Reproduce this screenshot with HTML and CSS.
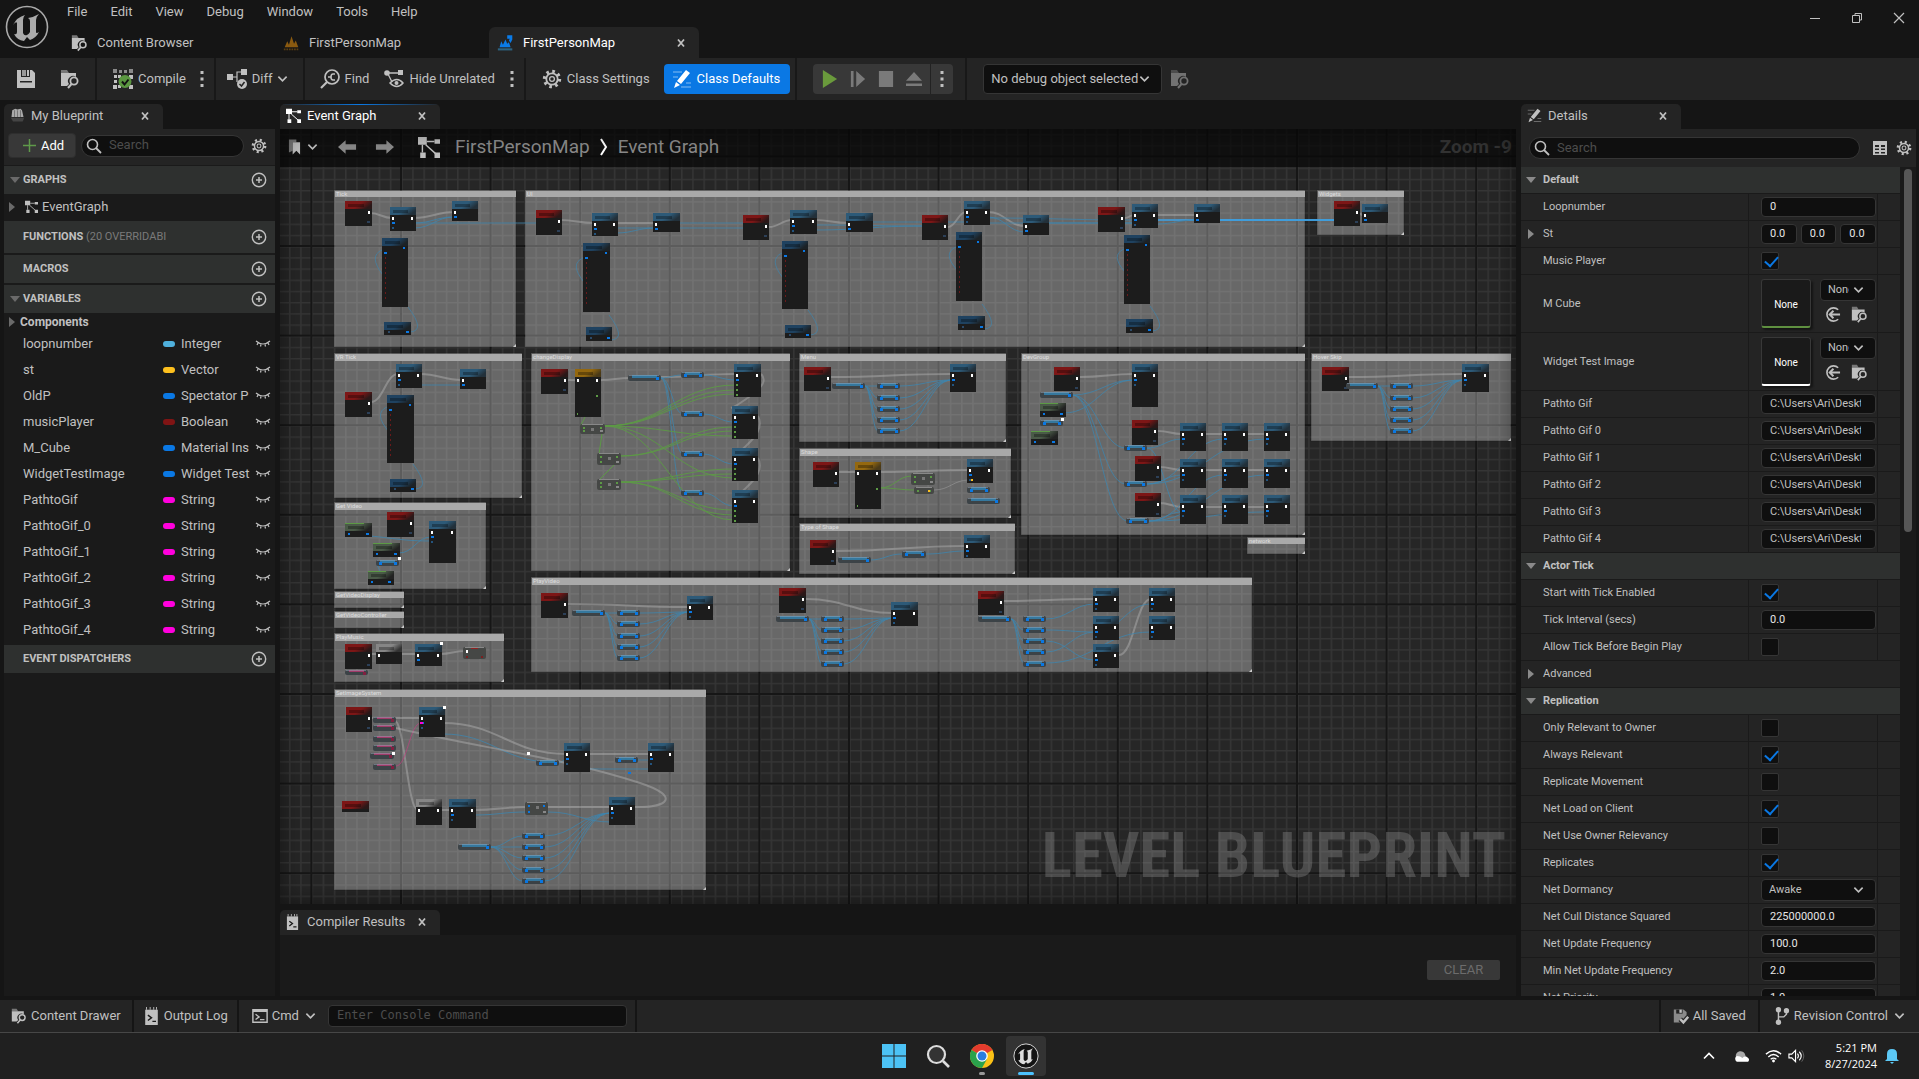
FILE: index.html
```
<!DOCTYPE html>
<html lang="en">
<head>
	<meta charset="utf-8">
	<title>FirstPersonMap</title>
	<link rel="stylesheet" href="styles.css">
</head>
<body>
<svg class="sprite" aria-hidden="true">
	<symbol id="i-folder" viewBox="0 0 20 20"><path fill="#777" d="M1 1h6l2 3H1z"/><path fill="currentColor" d="M1 4h15v4a5 5 0 0 0-7 7l-2 2H1z"/><circle cx="14" cy="12" r="3.6" fill="none" stroke="currentColor" stroke-width="1.8"/><path d="M11.500 15L8 19" stroke="currentColor" stroke-width="2"/></symbol>
	<symbol id="i-map" viewBox="0 0 20 20"><path fill="currentColor" d="M2 15l3-7 2 4 3-10 3 9 2-4 3 8z"/><path stroke="currentColor" stroke-width="2" stroke-dasharray="2 1" opacity=".6" d="M1 17.500h18"/></symbol>
	<symbol id="i-mapbp" viewBox="0 0 20 20"><path fill="currentColor" d="M3 15l2-7 2 4 3-6 2 5 2-2 2 6z"/><path fill="currentColor" d="M12 1h6v5l-2 4-2-3 1-2h-3z"/><path stroke="#2c6382" stroke-width="2.500" d="M1 17.500h17"/></symbol>
	<symbol id="i-x" viewBox="0 0 10 10"><path d="M2 1.500l6 7M8 1.500l-6 7" stroke="currentColor" stroke-width="1.800"/></symbol>
	<symbol id="i-save" viewBox="0 0 20 20"><path fill="currentColor" d="M1 1h15l3 3v15H1z"/><path fill="#242424" d="M5 1h9v7H5zM4 12h12v1.500H4z"/><path fill="#999" d="M6 1h4v6H6z"/><path fill="currentColor" d="M11 1h2v6h-2z"/></symbol>
	<symbol id="i-saved" viewBox="0 0 20 20"><path fill="#8a8a8a" d="M1 2h12l4 3v6l-6 7H1z"/><path fill="#242424" d="M4 2h8v5H4z"/><path fill="currentColor" d="M8 2h3v4H8z"/><path fill="none" stroke="#242424" stroke-width="6" d="M9 14l4 4 6-7"/><path fill="none" stroke="currentColor" stroke-width="3" d="M9 14l4 4 6-7"/></symbol>
	<symbol id="i-compile" viewBox="0 0 20 20"><g fill="#8a8a8a"><path d="M0 0h4v4H0zM6 1h3v3H6zM11 1h3v3h-3zM16 0h4v4h-4z"/></g><path fill="currentColor" d="M1 6h3v3H1zM5 6h3v3H5zM1 11h3v3H1zM0 16h4v4H0zM5 16h3v3H5zM16 6h4v4h-4zM16 16h4v4h-4z"/><circle cx="12" cy="12.500" r="6.500" fill="#5a9640"/><path d="M9 12.500l2.500 3 4-5" fill="none" stroke="#111" stroke-width="2"/></symbol>
	<symbol id="i-dots" viewBox="0 0 4 18"><path fill="currentColor" d="M.5 1h3v3h-3zM.5 7.500h3v3h-3zM.5 14h3v3h-3z"/></symbol>
	<symbol id="i-chev" viewBox="0 0 12 8"><path d="M1.500 1.500L6 6l4.500-4.500" fill="none" stroke="currentColor" stroke-width="1.800"/></symbol>
	<symbol id="i-diff" viewBox="0 0 20 20"><path fill="currentColor" d="M0 5h6v6H0zM14 0h6v6h-6z"/><path d="M5 8h5V3h4M10 8v5" fill="none" stroke="currentColor" stroke-width="1.200"/><circle cx="15" cy="15" r="5" fill="currentColor"/><path d="M12.500 15l2 2 3-4" fill="none" stroke="#242424" stroke-width="1.500"/></symbol>
	<symbol id="i-find" viewBox="0 0 20 20"><circle cx="12" cy="8" r="7" fill="none" stroke="currentColor" stroke-width="1.700"/><path d="M7 13l-6 6" stroke="currentColor" stroke-width="2.200"/><path d="M8 8h3m4-3h-2q-2 0-2 3t2 3h2" fill="none" stroke="currentColor" stroke-width="1.600"/></symbol>
	<symbol id="i-hide" viewBox="0 0 20 20"><circle cx="3" cy="4" r="2.800" fill="currentColor"/><path fill="currentColor" d="M14 1h5v5h-5z"/><path d="M5 4h9M4 5l4 8" stroke="currentColor" stroke-width="1.300"/><path d="M6 14q7-7 13 0q-6 7-13 0z" fill="none" stroke="currentColor" stroke-width="1.500"/><circle cx="12.500" cy="14" r="2" fill="currentColor"/></symbol>
	<symbol id="i-gear" viewBox="0 0 20 20"><circle cx="10" cy="10" r="7.600" fill="none" stroke="currentColor" stroke-width="3.200" stroke-dasharray="2.600 3.370"/><circle cx="10" cy="10" r="5.700" fill="none" stroke="currentColor" stroke-width="1.800"/><circle cx="10" cy="10" r="2.400" fill="none" stroke="currentColor" stroke-width="1.300"/></symbol>
	<symbol id="i-pencil" viewBox="0 0 20 20"><path d="M1 3h9M1 8h5M14 14h5M9 18h10" stroke="currentColor" stroke-width="1.200" opacity=".5"/><path fill="currentColor" d="M14 1l4 3-9 11-4-3zM4 13l4 3-6 3z"/></symbol>
	<symbol id="i-graph" viewBox="0 0 20 20"><path fill="currentColor" d="M0 1h8v7H0zM15 3h5v4h-5zM2 15h5v5H2zM15 15h5v5h-5z"/><path d="M8 5h7M4 8v7M7 8l9 8" stroke="currentColor" stroke-width="1.300"/></symbol>
	<symbol id="i-book" viewBox="0 0 20 20"><path fill="#aaa" d="M2 12l1-9 4-2 3 1 4-1 2 2 2 9z"/><path fill="#444" d="M1 13h18l-2 5H4z"/><path d="M6 3v9M10 3v9M14 3v9" stroke="#666"/></symbol>
	<symbol id="i-search" viewBox="0 0 16 16"><circle cx="6.500" cy="6.500" r="5" fill="none" stroke="currentColor" stroke-width="1.600"/><path d="M10 10l5 5" stroke="currentColor" stroke-width="1.800"/></symbol>
	<symbol id="i-plus" viewBox="0 0 14 14"><path d="M7 0v14M0 7h14" stroke="currentColor" stroke-width="1.600"/></symbol>
	<symbol id="i-addc" viewBox="0 0 16 16"><circle cx="8" cy="8" r="6.700" fill="none" stroke="currentColor" stroke-width="1.400"/><path d="M8 5v6M5 8h6" stroke="currentColor" stroke-width="1.500"/></symbol>
	<symbol id="i-down" viewBox="0 0 10 6"><path fill="currentColor" d="M0 0h10L5 6z"/></symbol>
	<symbol id="i-right" viewBox="0 0 6 10"><path fill="currentColor" d="M0 0v10l6-5z"/></symbol>
	<symbol id="i-eye" viewBox="0 0 16 8"><path d="M1 1q7 6 14 0M3 3l-1 2M6 4.500l-.5 2M10 4.500l.5 2M13 3l1 2" fill="none" stroke="currentColor" stroke-width="1.200"/></symbol>
	<symbol id="i-mark" viewBox="0 0 14 18"><path fill="#777" d="M1 1h8v3H5v9l-4 2z"/><path fill="currentColor" d="M5 4h8v13l-4-4-4 4z"/></symbol>
	<symbol id="i-arrow" viewBox="0 0 20 16"><path fill="currentColor" d="M0 8l8-7v4h11v6H8v4z"/></symbol>
	<symbol id="i-log" viewBox="0 0 14 20"><path fill="currentColor" d="M0 3h14v17H0z"/><path fill="currentColor" d="M1 0h1v3H1zM5 0h1v3H5zM9 0h1v3H9zM12 0h1v3h-1z"/><path d="M3 9l4 3-4 3M8 16h4" fill="none" stroke="#1a1a1a" stroke-width="1.600"/></symbol>
	<symbol id="i-cmd" viewBox="0 0 18 18"><path d="M1 2h16v14H1z" fill="none" stroke="currentColor" stroke-width="1.600"/><path d="M1 3h16" stroke="currentColor" stroke-width="3"/><path d="M4 7l4 3-4 3M9 13h5" fill="none" stroke="currentColor" stroke-width="1.500"/></symbol>
	<symbol id="i-branch" viewBox="0 0 18 20"><g fill="currentColor"><circle cx="5" cy="3" r="3"/><circle cx="5" cy="17" r="3"/><circle cx="14" cy="4" r="3"/></g><path d="M5 3v14M14 4v4l-3 3H5" fill="none" stroke="currentColor" stroke-width="1.600"/></symbol>
	<symbol id="i-table" viewBox="0 0 16 16"><path fill="currentColor" d="M1 1h14v14H1z"/><path fill="#242424" d="M3 5h4v2H3zM9 5h4v2H9zM3 8.500h4v1.500H3zM9 8.500h4v1.500H9zM3 12h4v1.500H3zM9 12h4v1.500H9z"/></symbol>
	<symbol id="i-use" viewBox="0 0 18 18"><path d="M15 4a7 7 0 1 0 0 10" fill="none" stroke="currentColor" stroke-width="1.700"/><path d="M17 9H6m4-4L6 9l4 4" fill="none" stroke="currentColor" stroke-width="2"/></symbol>
	<symbol id="i-unreal" viewBox="0 0 44 44"><circle cx="22" cy="22" r="20.500" fill="#141414" stroke="currentColor" stroke-width="1.600"/><path fill="currentColor" d="M8 20Q12 12 20 10q-2 2-2 5v13q1 3 4 2 2-1 3-3V16q0-2-2-3 6-1 11-4-3 3-3 6v12q0 2 3 0-3 6-9 8l-3-3-3 4q-7-1-10-7 3 1 3-2V18q-1-2-4 2z"/></symbol>
</svg>

<div class="app">
	<header class="titlebar">
		<svg class="logo"><use href="#i-unreal"/></svg>
		<div class="title-main">
			<div class="menu-row">
				<nav class="menu">
					<a href="#">File</a><a href="#">Edit</a><a href="#">View</a><a href="#">Debug</a><a href="#">Window</a><a href="#">Tools</a><a href="#">Help</a>
				</nav>
				<div class="winbtns">
					<button aria-label="Minimize"><svg viewBox="0 0 12 12"><path d="M1 6.500h10" stroke="currentColor"/></svg></button>
					<button aria-label="Restore"><svg viewBox="0 0 12 12"><path d="M1.500 3.500h7v7h-7zM4 3V1.500h6.500V8H9" fill="none" stroke="currentColor"/></svg></button>
					<button aria-label="Close"><svg viewBox="0 0 12 12"><path d="M1 1l10 10M11 1L1 11" stroke="currentColor" stroke-width="1.200"/></svg></button>
				</div>
			</div>
			<div class="doc-tabs">
				<div class="doc-tab"><svg><use href="#i-folder"/></svg>Content Browser</div>
				<div class="doc-tab level"><svg><use href="#i-map"/></svg>FirstPersonMap</div>
				<div class="doc-tab active"><svg><use href="#i-mapbp"/></svg>FirstPersonMap<button class="close" aria-label="Close tab"><svg><use href="#i-x"/></svg></button></div>
			</div>
		</div>
	</header>

	<div class="toolbar">
		<div class="group files">
			<button aria-label="Save"><svg><use href="#i-save"/></svg></button>
			<button aria-label="Browse"><svg><use href="#i-folder"/></svg></button>
		</div>
		<div class="group">
			<button><svg><use href="#i-compile"/></svg>Compile</button>
			<button class="more" aria-label="Compile options"><svg><use href="#i-dots"/></svg></button>
		</div>
		<div class="group diff">
			<button><svg><use href="#i-diff"/></svg>Diff<svg class="chev"><use href="#i-chev"/></svg></button>
		</div>
		<div class="group find">
			<button><svg><use href="#i-find"/></svg>Find</button>
			<button><svg><use href="#i-hide"/></svg>Hide Unrelated</button>
			<button class="more" aria-label="Hide options"><svg><use href="#i-dots"/></svg></button>
		</div>
		<div class="group class">
			<button><svg><use href="#i-gear"/></svg>Class Settings</button>
			<button class="primary"><svg><use href="#i-pencil"/></svg>Class Defaults</button>
		</div>
		<div class="group sim">
			<div class="play">
				<button aria-label="Play"><svg viewBox="0 0 18 20"><path d="M1 0l16 10L1 20z" fill="#6a9a3c"/></svg></button>
				<button aria-label="Step"><svg viewBox="0 0 18 20"><path d="M1 1h3v18H1zM7 1l10 9-10 9z" fill="#7a7a7a"/></svg></button>
				<button aria-label="Stop"><svg viewBox="0 0 18 20"><path d="M1 1h16v18H1z" fill="#7a7a7a"/></svg></button>
				<button aria-label="Eject"><svg viewBox="0 0 18 20"><path d="M9 2l9 10H0zM0 15h18v3H0z" fill="#7a7a7a"/></svg></button>
				<button class="more" aria-label="Play options"><svg><use href="#i-dots"/></svg></button>
			</div>
		</div>
		<div class="group debug">
			<span class="select"><select aria-label="Debug object"><option>No debug object selected</option></select><svg><use href="#i-chev"/></svg></span>
			<button class="dim" aria-label="Locate object"><svg><use href="#i-folder"/></svg></button>
		</div>
	</div>

	<main class="work">
		<aside class="dock blueprint">
			<div class="tab"><svg><use href="#i-book"/></svg>My Blueprint<button class="close" aria-label="Close"><svg><use href="#i-x"/></svg></button></div>
			<div class="panel">
				<div class="panel-tools">
					<button class="add"><svg><use href="#i-plus"/></svg>Add</button>
					<label class="search"><svg><use href="#i-search"/></svg><input type="text" placeholder="Search" aria-label="Search blueprint"></label>
					<button class="icon" aria-label="Settings"><svg><use href="#i-gear"/></svg></button>
				</div>
				<div class="sec open">GRAPHS<button aria-label="Add graph"><svg><use href="#i-addc"/></svg></button></div>
				<div class="tree"><svg class="tri"><use href="#i-right"/></svg><svg class="gico"><use href="#i-graph"/></svg>EventGraph</div>
				<div class="sec tall">FUNCTIONS&nbsp;<span>(20 OVERRIDABI</span><button aria-label="Add function"><svg><use href="#i-addc"/></svg></button></div>
				<div class="sec">MACROS<button aria-label="Add macro"><svg><use href="#i-addc"/></svg></button></div>
				<div class="sec open">VARIABLES<button aria-label="Add variable"><svg><use href="#i-addc"/></svg></button></div>
				<div class="comp"><svg class="tri"><use href="#i-right"/></svg>Components</div>
				<ul class="vars">
					<li><span>loopnumber</span><i class="int"></i><em>Integer</em><svg><use href="#i-eye"/></svg></li>
					<li><span>st</span><i class="vec"></i><em>Vector</em><svg><use href="#i-eye"/></svg></li>
					<li><span>OldP</span><i class="obj"></i><em>Spectator P</em><svg><use href="#i-eye"/></svg></li>
					<li><span>musicPlayer</span><i class="bool"></i><em>Boolean</em><svg><use href="#i-eye"/></svg></li>
					<li><span>M_Cube</span><i class="obj"></i><em>Material Ins</em><svg><use href="#i-eye"/></svg></li>
					<li><span>WidgetTestImage</span><i class="obj"></i><em>Widget Test</em><svg><use href="#i-eye"/></svg></li>
					<li><span>PathtoGif</span><i class="str"></i><em>String</em><svg><use href="#i-eye"/></svg></li>
					<li><span>PathtoGif_0</span><i class="str"></i><em>String</em><svg><use href="#i-eye"/></svg></li>
					<li><span>PathtoGif_1</span><i class="str"></i><em>String</em><svg><use href="#i-eye"/></svg></li>
					<li><span>PathtoGif_2</span><i class="str"></i><em>String</em><svg><use href="#i-eye"/></svg></li>
					<li><span>PathtoGif_3</span><i class="str"></i><em>String</em><svg><use href="#i-eye"/></svg></li>
					<li><span>PathtoGif_4</span><i class="str"></i><em>String</em><svg><use href="#i-eye"/></svg></li>
				</ul>
				<div class="sec">EVENT DISPATCHERS<button aria-label="Add dispatcher"><svg><use href="#i-addc"/></svg></button></div>
			</div>
		</aside>

		<section class="center">
			<div class="dock graph-dock">
				<div class="tab focus"><svg><use href="#i-graph"/></svg>Event Graph<button class="close" aria-label="Close"><svg><use href="#i-x"/></svg></button></div>
				<div class="graph">
					<svg class="canvas" id="canvas"></svg>
					<div class="crumbs">
						<button class="mark" aria-label="Bookmarks"><svg><use href="#i-mark"/></svg><svg class="chev"><use href="#i-chev"/></svg></button>
						<button class="nav" aria-label="Back"><svg><use href="#i-arrow"/></svg></button>
						<button class="nav fwd" aria-label="Forward"><svg><use href="#i-arrow"/></svg></button>
						<svg class="gico"><use href="#i-graph"/></svg>
						<a href="#">FirstPersonMap</a>
						<svg class="sep" viewBox="0 0 8 18"><path d="M1 1l5 8-5 8" fill="none" stroke="#fff" stroke-width="2"/></svg>
						<a href="#">Event Graph</a>
						<b>Zoom -9</b>
					</div>
					<div class="watermark">LEVEL BLUEPRINT</div>
				</div>
			</div>
			<div class="dock results">
				<div class="tab"><svg class="log"><use href="#i-log"/></svg>Compiler Results<button class="close" aria-label="Close"><svg><use href="#i-x"/></svg></button></div>
				<div class="panel"><button class="clear" disabled>CLEAR</button></div>
			</div>
		</section>

		<aside class="dock details">
			<div class="tab"><svg><use href="#i-pencil"/></svg>Details<button class="close" aria-label="Close"><svg><use href="#i-x"/></svg></button></div>
			<div class="panel">
				<div class="panel-tools">
					<label class="search"><svg><use href="#i-search"/></svg><input type="text" placeholder="Search" aria-label="Search details"></label>
					<button class="icon" aria-label="Property matrix"><svg><use href="#i-table"/></svg></button>
					<button class="icon" aria-label="Settings"><svg><use href="#i-gear"/></svg></button>
				</div>
				<div class="scroll">
					<form class="props">
						<div class="head"><svg><use href="#i-down"/></svg>Default</div>
						<div class="row"><label for="loop">Loopnumber</label><div><input type="text" id="loop" value="0"></div></div>
						<div class="row"><label for="stx"><svg class="tri"><use href="#i-right"/></svg>St</label><div class="vec3"><input type="text" id="stx" value="0.0"><input type="text" aria-label="St Y" value="0.0"><input type="text" aria-label="St Z" value="0.0"></div></div>
						<div class="row"><label for="music">Music Player</label><div><input type="checkbox" id="music" checked></div></div>
						<div class="row asset"><label for="cube">M Cube</label><div><span class="thumb green">None</span><div class="pick"><span class="select"><select id="cube"><option>None</option></select><svg><use href="#i-chev"/></svg></span><button type="button" aria-label="Use selected"><svg><use href="#i-use"/></svg></button><button type="button" aria-label="Browse to asset"><svg><use href="#i-folder"/></svg></button></div></div></div>
						<div class="row asset"><label for="wimg">Widget Test Image</label><div><span class="thumb">None</span><div class="pick"><span class="select"><select id="wimg"><option>None</option></select><svg><use href="#i-chev"/></svg></span><button type="button" aria-label="Use selected"><svg><use href="#i-use"/></svg></button><button type="button" aria-label="Browse to asset"><svg><use href="#i-folder"/></svg></button></div></div></div>
						<div class="row path"><label for="g">Pathto Gif</label><div><input type="text" id="g" value="C:\Users\Ari\Desktop"></div></div>
						<div class="row path"><label for="g0">Pathto Gif 0</label><div><input type="text" id="g0" value="C:\Users\Ari\Desktop"></div></div>
						<div class="row path"><label for="g1">Pathto Gif 1</label><div><input type="text" id="g1" value="C:\Users\Ari\Desktop"></div></div>
						<div class="row path"><label for="g2">Pathto Gif 2</label><div><input type="text" id="g2" value="C:\Users\Ari\Desktop"></div></div>
						<div class="row path"><label for="g3">Pathto Gif 3</label><div><input type="text" id="g3" value="C:\Users\Ari\Desktop"></div></div>
						<div class="row path"><label for="g4">Pathto Gif 4</label><div><input type="text" id="g4" value="C:\Users\Ari\Desktop"></div></div>
						<div class="head"><svg><use href="#i-down"/></svg>Actor Tick</div>
						<div class="row"><label for="tick">Start with Tick Enabled</label><div><input type="checkbox" id="tick" checked></div></div>
						<div class="row"><label for="intv">Tick Interval (secs)</label><div><input type="text" id="intv" value="0.0"></div></div>
						<div class="row"><label for="before">Allow Tick Before Begin Play</label><div><input type="checkbox" id="before"></div></div>
						<div class="row wide"><span class="name"><svg class="tri"><use href="#i-right"/></svg>Advanced</span></div>
						<div class="head"><svg><use href="#i-down"/></svg>Replication</div>
						<div class="row"><label for="r1">Only Relevant to Owner</label><div><input type="checkbox" id="r1"></div></div>
						<div class="row"><label for="r2">Always Relevant</label><div><input type="checkbox" id="r2" checked></div></div>
						<div class="row"><label for="r3">Replicate Movement</label><div><input type="checkbox" id="r3"></div></div>
						<div class="row"><label for="r4">Net Load on Client</label><div><input type="checkbox" id="r4" checked></div></div>
						<div class="row"><label for="r5">Net Use Owner Relevancy</label><div><input type="checkbox" id="r5"></div></div>
						<div class="row"><label for="r6">Replicates</label><div><input type="checkbox" id="r6" checked></div></div>
						<div class="row"><label for="dorm">Net Dormancy</label><div><span class="select"><select id="dorm"><option>Awake</option></select><svg><use href="#i-chev"/></svg></span></div></div>
						<div class="row"><label for="cull">Net Cull Distance Squared</label><div><input type="text" id="cull" value="225000000.0"></div></div>
						<div class="row"><label for="freq">Net Update Frequency</label><div><input type="text" id="freq" value="100.0"></div></div>
						<div class="row"><label for="minf">Min Net Update Frequency</label><div><input type="text" id="minf" value="2.0"></div></div>
						<div class="row"><label for="prio">Net Priority</label><div><input type="text" id="prio" value="1.0"></div></div>
					</form>
					<div class="bar"><div class="thumb-bar"></div></div>
				</div>
			</div>
		</aside>
	</main>

	<footer class="status">
		<button class="st"><svg><use href="#i-folder"/></svg>Content Drawer</button>
		<button class="st out"><svg class="log"><use href="#i-log"/></svg>Output Log</button>
		<div class="st cmd">
			<button><svg><use href="#i-cmd"/></svg>Cmd<svg class="chev"><use href="#i-chev"/></svg></button>
			<input type="text" placeholder="Enter Console Command" aria-label="Console command">
		</div>
		<div class="st fill"></div>
		<button class="st saved"><svg><use href="#i-saved"/></svg>All Saved</button>
		<button class="st rev"><svg><use href="#i-branch"/></svg>Revision Control<svg class="chev"><use href="#i-chev"/></svg></button>
	</footer>
</div>

<div class="taskbar">
	<div class="pins">
		<button aria-label="Start"><svg viewBox="0 0 24 24"><path fill="#4cc2f5" d="M0 0h11.500v11.500H0zM12.500 0H24v11.500H12.500zM0 12.500h11.500V24H0zM12.500 12.500H24V24H12.500z"/></svg></button>
		<button aria-label="Search"><svg viewBox="0 0 24 24"><circle cx="10.500" cy="10.500" r="8.500" fill="#333" stroke="#ddd" stroke-width="2.200"/><path d="M17 17l6 6" stroke="#ddd" stroke-width="2.600"/></svg></button>
		<button class="running" aria-label="Chrome"><svg viewBox="0 0 24 24"><circle cx="12" cy="12" r="12" fill="#fbc116"/><path fill="#e33b2e" d="M12 12L1.600 6A12 12 0 0 1 22.400 6z"/><path fill="#2ba24c" d="M12 12L1.600 6A12 12 0 0 0 12 24l5-9z"/><circle cx="12" cy="12" r="5.800" fill="#fff"/><circle cx="12" cy="12" r="4.500" fill="#2a7de1"/></svg></button>
		<button class="current" aria-label="Unreal Editor"><svg class="ue"><use href="#i-unreal"/></svg></button>
	</div>
	<div class="tray">
		<svg class="up" viewBox="0 0 12 8"><path d="M1 6.500l5-5 5 5" fill="none" stroke="currentColor" stroke-width="1.600"/></svg>
		<svg class="cloud" viewBox="0 0 18 12"><path fill="#aaa" d="M3 7a5 5 0 0 1 10-2l1 4H3z"/><path fill="#fff" d="M4 12a3.500 3.500 0 0 1 0-6q4 0 6 2 3-3 6 0a2.500 2.500 0 0 1 0 4z"/></svg>
		<svg class="wifi" viewBox="0 0 18 14"><path d="M1 5q8-7 16 0M3.500 8q5.500-5 11 0M6 10.500q3-2.500 6 0" fill="none" stroke="currentColor" stroke-width="1.500"/><circle cx="9" cy="12.300" r="1.500" fill="currentColor"/></svg>
		<svg class="vol" viewBox="0 0 18 14"><path d="M1 5h3l4-4v12L4 9H1zM10 4.500q2 2.500 0 5M12 2.500q4 4.500 0 9" fill="none" stroke="currentColor" stroke-width="1.200"/><path d="M14.500 1q4.500 6 0 12" fill="none" stroke="#666"/></svg>
		<div class="clock">5:21 PM<br>8/27/2024</div>
		<svg class="bell" viewBox="0 0 14 16"><path fill="#5cc8f5" d="M2 11V6q0-5 5-5t5 5v5l2 2H0zM5 14h4l-2 2z"/></svg>
	</div>
</div>
<script src="graph.js"></script>
</body>
</html>
```
FILE: styles.css
```
* {
	box-sizing: border-box;
}
body {
	margin: 0;
	height: 100vh;
	display: flex;
	flex-direction: column;
	overflow: hidden;
	background: #151515;
	color: #c0c0c0;
	font: 13px/16px Roboto, "Liberation Sans", sans-serif;
}
.sprite {
	position: absolute;
	width: 0;
	height: 0;
}
svg {
	display: block;
	flex: none;
}
button {
	display: flex;
	align-items: center;
	padding: 0;
	border: 0;
	background: none;
	color: inherit;
	font: inherit;
}
a {
	color: inherit;
	text-decoration: none;
}
input, select {
	min-width: 0;
	border: 1px solid #353535;
	border-radius: 4px;
	background: #0f0f0f;
	color: inherit;
	font: inherit;
	outline: 0;
}
input::placeholder {
	color: #4c4c4c;
	opacity: 1;
}
.app {
	flex: 1;
	min-height: 0;
	display: flex;
	flex-direction: column;
}
.chev {
	width: 11px;
	height: 8px;
}

/* title bar */
.titlebar {
	display: flex;
	height: 58px;
}
.logo {
	width: 44px;
	height: 44px;
	margin: 5px 6px 5px 5px;
	color: #aaa;
}
.title-main {
	flex: 1;
	display: flex;
	flex-direction: column;
}
.menu-row {
	display: flex;
	justify-content: space-between;
	height: 27px;
}
.menu {
	display: flex;
	gap: 23px;
	padding: 4px 0 0 12px;
}
.winbtns {
	display: flex;
	gap: 30px;
	padding: 8px 14px 0 0;
}
.winbtns svg {
	width: 12px;
	height: 12px;
}
.doc-tabs {
	display: flex;
	height: 31px;
}
.doc-tab {
	display: flex;
	align-items: center;
	width: 212px;
	padding-left: 16px;
}
.doc-tab > svg {
	width: 17px;
	height: 20px;
	margin-right: 9px;
}
.doc-tab.level > svg {
	color: #8a5a10;
}
.doc-tab.active {
	width: 210px;
	padding-left: 8px;
	border-radius: 6px 6px 0 0;
	background: #242424;
	color: #fff;
}
.doc-tab.active > svg {
	color: #0a7be8;
}
.doc-tab.level {
	width: 222px;
}
.close {
	margin-left: auto;
	margin-right: 13px;
	color: #c0c0c0;
}
.close svg {
	width: 10px;
	height: 10px;
}

/* toolbar */
.toolbar {
	display: flex;
	align-items: stretch;
	height: 42px;
	background: #242424;
}
.group {
	display: flex;
	align-items: center;
	gap: 14px;
	padding: 0 10px 0 16px;
	border-right: 2px solid #181818;
}
.group button > svg:first-child {
	width: 20px;
	height: 20px;
	margin-right: 5px;
}
.group .chev {
	margin-left: 4px;
}
.group .more > svg:first-child {
	width: 4px;
	height: 18px;
	margin-right: 0;
}
.files {
	gap: 19px;
}
.diff {
	padding-left: 11px;
	padding-right: 15px;
}
.find {
	gap: 15px;
	padding-left: 15px;
}
.class {
	padding-right: 5px;
}
.primary {
	height: 30px;
	padding: 0 10px 0 8px;
	border-radius: 4px;
	background: #0a78e4;
	color: #fff;
}
.sim {
	padding: 0 12px 0 16px;
}
.play {
	display: flex;
	align-items: center;
	gap: 12px;
	height: 30px;
	padding-left: 9px;
	border-radius: 4px;
	background: #383838;
}
.play button > svg:first-child {
	width: 16px;
	height: 18px;
	margin: 0;
}
.play .more {
	height: 30px;
	padding: 0 9px;
	border-left: 1px solid #222;
	margin-left: -4px;
}
.debug {
	border: 0;
	gap: 8px;
}
.debug .select {
	width: 179px;
	height: 30px;
}
.dim {
	opacity: .5;
}
.select {
	position: relative;
	display: block;
}
.select select {
	width: 100%;
	height: 100%;
	padding: 0 26px 0 7px;
	appearance: none;
}
.debug .select select {
	padding: 0 20px 0 7px;
}
.select svg {
	position: absolute;
	right: 12px;
	top: 50%;
	width: 11px;
	height: 8px;
	margin-top: -4px;
	pointer-events: none;
}

/* docks */
.work {
	flex: 1;
	min-height: 0;
	display: grid;
	grid-template-columns: 271px minmax(0, 1fr) 395px;
	gap: 5px;
	padding: 4px 3px 4px 4px;
}
.dock {
	display: flex;
	flex-direction: column;
	min-height: 0;
}
.tab {
	display: flex;
	align-items: center;
	width: 160px;
	height: 25px;
	padding: 0 0 2px 6px;
	border-radius: 5px 5px 0 0;
	background: #242424;
}
.tab > svg {
	width: 15px;
	height: 15px;
	margin-right: 6px;
}
.tab > svg.log {
	width: 13px;
	height: 16px;
	margin-right: 8px;
}
.tab.focus {
	color: #fff;
	background: linear-gradient(90deg, #242424, #0a78e4 50%, #242424) 0 0 / 100% 1px no-repeat #242424;
}
.panel {
	flex: 1;
	min-height: 0;
	background: #1a1a1a;
}
.panel-tools {
	display: flex;
	align-items: center;
	background: #242424;
}
.search {
	position: relative;
	flex: 1;
	min-width: 0;
}
.search svg {
	position: absolute;
	left: 5px;
	top: 3px;
	width: 16px;
	height: 16px;
}
.search input {
	display: block;
	width: 100%;
	height: 22px;
	padding: 0 10px 2px 27px;
	border-radius: 11px;
}
.icon svg {
	width: 16px;
	height: 16px;
}

/* my blueprint */
.blueprint .tab {
	width: 159px;
}
.blueprint .panel-tools {
	gap: 5px;
	height: 36px;
	padding: 0 8px 3px 4px;
	margin-bottom: 1px;
}
.add {
	width: 68px;
	height: 25px;
	gap: 5px;
	padding-left: 14px;
	border: 1px solid #2e2e2e;
	border-radius: 4px;
	background: #383838;
	color: #fff;
}
.add svg {
	width: 13px;
	height: 13px;
	color: #5f9a4a;
}
.blueprint .icon {
	margin-left: 2px;
}
.sec {
	position: relative;
	display: flex;
	align-items: center;
	height: 28px;
	padding: 0 8px 0 19px;
	margin-bottom: 2px;
	background: #2e302f;
	font-size: 11px;
	font-weight: bold;
}
.sec span {
	color: #7a7a7a;
	font-weight: normal;
}
.sec button {
	margin-left: auto;
}
.sec button svg {
	width: 16px;
	height: 16px;
}
.sec.tall {
	height: 32px;
}
.sec.open {
	margin-bottom: 0;
}
.sec.open::before {
	content: "";
	position: absolute;
	left: 6px;
	top: 11px;
	border: 5px solid transparent;
	border-top: 6px solid #6a6a6a;
	border-bottom: 0;
}
.tri {
	width: 6px;
	height: 10px;
	color: #6a6a6a;
}
.tree {
	display: flex;
	align-items: center;
	height: 27px;
	padding: 0 0 2px 5px;
}
.gico {
	width: 15px;
	height: 13px;
	margin: 0 3px 0 9px;
}
.comp {
	display: flex;
	align-items: center;
	gap: 5px;
	height: 18px;
	padding-left: 5px;
	font-size: 12px;
	font-weight: bold;
}
.vars {
	margin: 0 0 2px;
	padding: 0;
	list-style: none;
}
.vars li {
	display: grid;
	grid-template-columns: 134px 12px 68px 16px;
	column-gap: 6px;
	align-items: center;
	height: 26px;
	padding-left: 19px;
}
.vars i {
	width: 12px;
	height: 6px;
	border-radius: 3px;
	background: #f0d;
}
.vars em {
	font-style: normal;
	white-space: nowrap;
}
.vars svg {
	width: 16px;
	height: 8px;
}
.vars .int { background: #4fb0dc; }
.vars .vec { background: #fdc01e; }
.vars .obj { background: #0a78e4; }
.vars .bool { background: #801414; }

/* graph */
.center {
	display: flex;
	flex-direction: column;
	gap: 6px;
	min-height: 0;
}
.graph-dock {
	flex: 1;
}
.graph {
	position: relative;
	flex: 1;
	min-height: 0;
	overflow: hidden;
	background: #262626;
}
.canvas {
	position: absolute;
	width: 100%;
	height: 100%;
}
.graph::after {
	content: "";
	position: absolute;
	inset: 0;
	box-shadow: inset 0 0 24px rgba(0, 0, 0, .5);
	pointer-events: none;
}
.crumbs {
	position: relative;
	display: flex;
	align-items: center;
	height: 38px;
	padding: 0 4px 2px 8px;
	background: rgba(10, 10, 10, .75);
	color: #8a8a8a;
	font-size: 19px;
	line-height: 24px;
}
.crumbs .mark {
	gap: 6px;
	margin-right: 20px;
	color: #c0c0c0;
}
.mark svg:first-child {
	width: 13px;
	height: 18px;
}
.nav {
	margin-right: 18px;
}
.nav svg {
	width: 19px;
	height: 16px;
}
.fwd svg {
	transform: scaleX(-1);
}
.crumbs .gico {
	width: 22px;
	height: 22px;
	margin: 0 15px 0 6px;
	color: #c0c0c0;
}
.crumbs .sep {
	width: 8px;
	height: 18px;
	margin: 0 10px;
}
.crumbs b {
	margin-left: auto;
	color: #333;
}
.watermark {
	position: absolute;
	right: 10px;
	bottom: 12px;
	color: rgba(150, 150, 150, .35);
	font: bold 63px/72px "Roboto Condensed", "Liberation Sans Narrow", "Liberation Sans", sans-serif;
	white-space: nowrap;
}
.w-title {
	fill: #ddd;
	font-size: 6px;
}
.results .panel {
	display: flex;
	justify-content: flex-end;
	align-items: flex-end;
	height: 61px;
	flex: none;
	padding: 0 16px 16px;
}
.clear {
	justify-content: center;
	width: 73px;
	height: 20px;
	border-radius: 2px;
	background: #383838;
	color: #6c6c6c;
}

/* details */
.details .panel {
	display: flex;
	flex-direction: column;
	font-size: 11px;
}
.details .panel-tools {
	gap: 8px;
	height: 38px;
	padding: 0 4px 0 8px;
	font-size: 13px;
}
.details .search {
	margin-right: 4px;
}
.scroll {
	flex: 1;
	min-height: 0;
	display: flex;
	overflow: hidden;
}
.props {
	flex: 1;
	min-width: 0;
}
.head, .row {
	display: flex;
	height: 27px;
	border-bottom: 1px solid #1a1a1a;
	background: #242424;
}
.head {
	align-items: center;
	gap: 7px;
	padding-left: 5px;
	background: #2e302f;
	font-weight: bold;
}
.head svg {
	width: 10px;
	height: 6px;
	color: #8a8a8a;
}
.row label, .name {
	position: relative;
	display: flex;
	flex: 1;
	align-items: center;
	padding: 0 0 1px 22px;
}
.row .tri {
	position: absolute;
	left: 7px;
	color: #8a8a8a;
}
.row > div {
	display: flex;
	align-items: center;
	width: 152px;
	padding: 0 24px 0 12px;
	border-left: 1px solid #1a1a1a;
	background: linear-gradient(#1a1a1a, #1a1a1a) 128px 0 / 1px 100% no-repeat;
}
.row input[type=text] {
	width: 100%;
	height: 20px;
	padding: 0 14px 2px 8px;
	color: #e6e6e6;
}
.row.path input[type=text] {
	color: #c0c0c0;
}
.row .vec3 {
	gap: 4px;
}
.row .vec3 input[type=text] {
	padding-right: 0;
}
.row input[type=checkbox] {
	width: 18px;
	height: 18px;
	margin: 0;
	border-radius: 2px;
	appearance: none;
}
.row input:checked::after {
	content: "";
	display: block;
	width: 11px;
	height: 6px;
	margin: 3px;
	border: solid #0a78e4;
	border-width: 0 0 2px 2px;
	transform: rotate(-48deg);
}
.row .select {
	width: 100%;
	height: 22px;
}
.row.asset {
	height: 58px;
}
.row.asset label {
	padding-bottom: 0;
}
.thumb {
	display: flex;
	flex: none;
	align-items: center;
	justify-content: center;
	width: 50px;
	height: 49px;
	padding-top: 3px;
	border: 1px solid #383838;
	border-bottom: 2px solid #fff;
	border-radius: 3px;
	background: #1a1a1a;
	box-shadow: 2px 2px 2px #151515;
	color: #fff;
	font-size: 10px;
}
.thumb.green {
	border-bottom-color: #5f9040;
}
.pick {
	display: flex;
	flex-wrap: wrap;
	gap: 5px 10px;
	margin: 0 0 5px 9px;
}
.pick button:nth-of-type(1) {
	margin-left: 4px;
}
.pick button svg {
	width: 17px;
	height: 17px;
}
.pick .select select {
	padding-right: 26px;
	text-overflow: clip;
}
.bar {
	width: 16px;
	padding: 2px 4px;
}
.thumb-bar {
	height: 44%;
	border-radius: 4px;
	background: #575757;
}

/* status bar */
.status {
	display: flex;
	gap: 2px;
	height: 33px;
	border-bottom: 1px solid #474747;
}
.st {
	display: flex;
	align-items: center;
	padding: 0 11px;
	background: #242424;
}
.st svg {
	width: 16px;
	height: 18px;
	margin-right: 4px;
}
.st .log {
	width: 13px;
	height: 18px;
	margin-right: 6px;
}
.st .chev {
	width: 11px;
	height: 8px;
	margin: 0 0 0 6px;
}
.st.out {
	padding-right: 9px;
}
.cmd {
	gap: 12px;
	padding: 0 8px 0 13px;
}
.cmd input {
	width: 299px;
	height: 22px;
	padding: 0 8px 2px;
	font: 12px "DejaVu Sans Mono", monospace;
}
.fill {
	flex: 1;
}
.saved {
	padding: 0 12px;
}
.rev {
	padding: 0 14px;
}

/* taskbar */
.taskbar {
	position: relative;
	display: flex;
	justify-content: center;
	height: 46px;
	background: #202020;
}
.pins {
	display: flex;
	align-items: center;
	gap: 4px;
}
.pins button {
	position: relative;
	justify-content: center;
	width: 40px;
	height: 40px;
	border-radius: 4px;
}
.pins svg {
	width: 24px;
	height: 24px;
}
.pins .ue {
	width: 26px;
	height: 26px;
	color: #ddd;
}
.current {
	background: #333;
}
.running::after, .current::after {
	content: "";
	position: absolute;
	bottom: 1px;
	left: 17px;
	width: 6px;
	height: 3px;
	border-radius: 2px;
	background: #999;
}
.current::after {
	left: 12px;
	width: 16px;
	background: #4cc2ff;
}
.tray {
	position: absolute;
	right: 20px;
	top: 0;
	display: flex;
	align-items: center;
	height: 46px;
	color: #fff;
}
.up {
	width: 12px;
	height: 8px;
	margin-right: 18px;
}
.cloud {
	width: 17px;
	height: 12px;
	margin-right: 15px;
}
.wifi {
	width: 17px;
	height: 14px;
	margin-right: 6px;
}
.vol {
	width: 17px;
	height: 14px;
	margin-right: 20px;
}
.clock {
	text-align: right;
	font: 11px/16px "Open Sans", sans-serif;
}
.bell {
	width: 14px;
	height: 16px;
	margin-left: 8px;
}
```
FILE: graph.js
```
// view offset of the graph panel
var OX = 280, OY = 129;

// comment boxes: x, y, right, bottom, title
var comments = [
	[334, 190, 516, 347, 'Tick'], [525, 190, 1305, 347, 'UI'], [1317, 190, 1404, 235, 'Widgets'],
	[334, 353, 522, 498, 'VR Tick'], [531, 353, 790, 571, 'changeDisplay'], [799, 353, 1006, 442, 'Menu'],
	[799, 448, 1011, 518, 'Shape'], [799, 523, 1015, 574, 'Type of Shape'], [1021, 353, 1305, 535, 'DevGroup'],
	[1311, 353, 1511, 441, 'Hover Skip'], [1247, 537, 1305, 554, 'network'], [531, 577, 1252, 672, 'PlayVideo'],
	[334, 502, 486, 589, 'Get Video'], [334, 591, 404, 608, 'GetVideoDisplay'], [334, 611, 404, 628, 'GetVideoController'],
	[334, 633, 504, 682, 'PlayMusic'], [334, 689, 706, 890, 'SetImageSystem']
];

// nodes: kind, x, y, w, h
var nodes = [
	'r 345 201 27 25', 'b 390 207 26 24', 'b 452 201 26 20', 'p 382 238 26 69', 'p 384 322 27 13',
	'r 536 210 26 25', 'b 592 213 26 23', 'b 653 213 27 19', 'p 583 243 27 69', 'p 586 327 26 14',
	'r 743 215 26 25', 'b 790 210 27 24', 'b 846 213 27 19', 'p 782 241 26 68', 'p 785 325 26 13',
	'r 922 215 26 25', 'b 964 201 26 24', 'b 1023 215 26 20', 'p 956 232 26 69', 'p 958 316 27 14',
	'r 1098 207 27 25', 'b 1132 204 26 24', 'b 1194 204 26 19', 'p 1124 235 26 69', 'p 1126 319 27 14',
	'r 1334 201 26 25', 'b 1362 204 26 19',
	'r 345 392 27 25', 'b 396 364 26 24', 'b 460 369 26 20', 'p 387 395 27 68', 'p 390 479 26 13',
	'r 541 369 27 25', 'y 575 369 26 48', 'v 628 375 33 6', 'v 681 372 23 6', 'v 681 411 23 6', 'v 681 451 23 6', 'v 681 490 23 6',
	'm 580 424 25 10', 'm 597 453 24 12', 'm 597 479 24 11',
	'g4 734 364 27 33', 'g4 732 406 26 33', 'g4 732 448 26 33', 'g4 732 490 26 33',
	'r 804 367 27 24', 'v 832 383 33 6', 'b 950 364 26 28',
	'r 813 462 26 25', 'y 855 462 26 47', 'm 911 473 24 12', 'm 914 487 20 7', 'b 967 459 26 24', 'v 967 487 23 6', 'v 967 498 33 6',
	'r 810 540 26 25', 'v 838 557 33 6', 'v 902 551 24 7', 'b 964 535 26 23',
	'r 541 593 27 25', 'v 572 610 33 6', 'b 687 596 26 24',
	'r 779 588 27 25', 'v 776 616 33 6', 'b 891 602 27 24',
	'r 978 591 26 24', 'v 978 616 33 6', 'b 1093 588 26 24', 'b 1093 616 26 24', 'b 1093 644 26 24', 'b 1149 588 26 24', 'b 1149 616 26 24',
	'r 1054 367 26 24', 'v 1040 392 33 6', 'b 1132 364 26 43', 'g 1040 403 26 14', 'v 1040 420 23 6', 'g 1031 431 27 14',
	'r 1132 420 26 25', 'b 1180 423 26 28', 'b 1222 423 26 28', 'b 1264 423 26 28', 'v 1124 445 23 6',
	'r 1135 456 26 25', 'b 1180 459 26 29', 'b 1222 459 26 29', 'b 1264 459 26 29', 'v 1124 481 23 6',
	'r 1135 493 26 24', 'b 1180 495 26 29', 'b 1222 495 26 29', 'b 1264 495 26 29', 'v 1126 518 23 6',
	'r 1322 367 27 24', 'v 1346 383 32 6', 'b 1462 364 27 28',
	'g 345 523 27 14', 'r 387 512 27 25', 'b 429 521 27 42', 'g 373 543 27 14', 'v 376 560 23 6', 'g 368 571 26 14',
	'r 345 644 27 25', 's 345 670 23 5', 'w 376 644 26 20', 'b 415 644 27 22', 't 463 647 23 12',
	'r 346 707 26 25', 's 373 717 23 6', 's 373 725 23 6', 's 373 736 23 6', 's 373 745 23 6', 's 370 753 24 6', 's 373 764 23 6',
	'b 419 707 26 30', 'v 536 760 23 6', 'b 564 743 26 29', 'v 615 757 23 6', 'b 648 743 26 29',
	'r 342 801 27 11', 'w 416 799 26 26', 'b 449 799 27 29', 'c 525 802 23 13', 'b 609 797 26 28', 'v 458 844 33 6'
];

// wires: kind, x1, y1, x2, y2
var wires = [
	'e 370 213 392 218', 'e 414 218 454 212', 'd 414 223 454 217', 'd 414 223 536 223', 'd 414 228 454 217',
	'e 560 220 594 223', 'e 616 223 655 223', 'd 616 228 655 228', 'd 616 233 655 228', 'd 680 223 743 223', 'd 680 228 743 228',
	'e 769 227 792 220', 'e 815 220 848 223', 'd 815 225 922 226', 'd 815 230 922 226', 'd 873 222 964 222',
	'e 948 227 966 212', 'e 988 212 1025 226', 'd 988 217 1025 232', 'd 988 223 1134 223', 'd 988 218 1134 220', 'd 1049 223 1134 223',
	'e 1125 218 1134 215', 'e 1156 215 1196 215', 'l 1156 220 1334 220', 'd 1156 224 1196 220', 'l 1220 220 1334 220', 'e 1356 213 1364 215',
	'e 371 402 398 374', 'e 420 374 462 380', 'd 420 385 462 385',
	'e 566 380 577 380', 'e 601 380 630 378', 'e 660 377 735 374', 'd 660 378 683 375', 'd 703 375 736 380',
	'd 661 378 683 414', 'd 661 378 683 454', 'd 661 378 683 493', 'd 703 414 734 422', 'd 703 454 734 464', 'd 703 493 734 506',
	'n 604 426 736 385', 'n 604 426 736 390', 'n 604 426 736 394', 'n 604 426 734 436', 'n 604 426 734 478', 'n 604 426 734 520',
	'n 620 456 734 427', 'n 620 456 734 431', 'n 620 482 734 469', 'n 620 482 734 474', 'n 620 482 734 510', 'n 620 482 734 515',
	'e 830 377 952 374', 'e 838 472 857 472', 'e 880 472 969 470', 'n 880 488 912 476', 'n 880 488 916 490', 'x 934 490 969 480',
	'e 836 551 966 546', 'd 870 560 902 554', 'd 926 554 966 551',
	'e 567 604 689 607', 'e 806 599 893 613', 'e 1004 601 1095 599', 'e 1119 655 1151 599',
	'd 1046 619 1095 604', 'd 1046 630 1095 632', 'd 1046 641 1095 660', 'd 1046 652 1095 632', 'd 1046 663 1151 632', 'd 1095 632 1151 604',
	'd 1011 619 1024 630', 'd 1011 619 1024 641', 'd 1011 619 1024 652', 'd 1011 619 1024 663',
	'e 1080 377 1134 374', 'd 1072 395 1134 380', 'd 1064 413 1134 380', 'd 1072 395 1126 448', 'd 1072 395 1126 484', 'd 1072 395 1128 521',
	'e 1158 431 1182 434', 'e 1204 434 1224 434', 'e 1246 434 1266 434', 'e 1160 467 1182 470', 'e 1204 470 1224 470', 'e 1246 470 1266 470',
	'e 1160 503 1182 507', 'e 1204 507 1224 507', 'e 1246 507 1266 507',
	'd 1147 448 1182 439', 'd 1147 484 1182 475', 'd 1149 521 1182 512', 'd 1147 448 1182 512', 'd 1147 484 1224 439', 'd 1149 521 1224 475',
	'd 1147 484 1266 439', 'd 1149 521 1266 475', 'd 1149 521 1266 512',
	'e 1348 377 1464 374',
	'd 345 535 431 541', 'd 399 553 431 537', 'd 380 575 378 563',
	'e 370 654 378 654', 'e 401 654 417 654', 'e 440 654 465 651',
	'e 372 718 421 718', 'e 443 723 566 754', 'd 443 734 552 762', 'd 558 763 566 760', 'e 588 754 650 754', 'd 590 769 650 769', 'd 638 760 650 760',
	'e 394 720 418 810', 'e 440 810 451 810', 'e 474 810 527 807', 'e 548 807 611 807', 'd 474 815 527 812', 'd 548 812 611 822', 'k 396 766 421 723'
];

// fan-outs of five variable getters: source x, pins x, ys, target x, target y
[
	[865, 877, [383, 395, 406, 417, 428], 952, 380],
	[605, 617, [610, 621, 633, 644, 655], 689, 612],
	[809, 821, [616, 627, 638, 649, 661], 893, 618],
	[1378, 1390, [383, 395, 406, 417, 428], 1464, 380],
	[491, 522, [833, 844, 855, 867, 878], 611, 813]
].forEach(function (f) {
	var sy = f[0] === 491 ? 847 : f[2][0] + 3;
	f[2].forEach(function (y) {
		wires.push('d ' + [f[0], sy, f[1] + 1, y + 3].join(' '));
		wires.push('d ' + [f[1] + 22, y + 3, f[3], f[4]].join(' '));
		nodes.push('v ' + [f[1], y, 23, 6].join(' '));
	});
});
[616, 627, 638, 649, 661].forEach(function (y) {
	nodes.push('v 1023 ' + y + ' 23 6');
});

var stroke = {
	e: ['#b4b4b4', 2, .45], d: ['#3f84ad', 1, .8], l: ['#3f9fe0', 2, .8],
	n: ['#5c9a45', 1, .9], x: ['#999', 1, .6], k: ['#c04080', 1, .7]
};
var heads = { r: 'url(#hr)', b: 'url(#hb)', g4: 'url(#hb)', p: 'url(#hp)', y: 'url(#hy)', g: 'url(#hg)', w: 'url(#hw)' };
var pins = { m: '#5c9a45', c: '#0a78e4', t: '#7a2020' };

function rect(x, y, w, h, fill, extra) {
	return '<rect x="' + x + '" y="' + y + '" width="' + w + '" height="' + h + '" fill="' + fill + '" ' + (extra || '') + '/>';
}

function head(id, a, b) {
	return '<linearGradient id="' + id + '" x2="1" y2=".4"><stop offset=".6" stop-color="' + a + '"/><stop offset="1" stop-color="' + b + '"/></linearGradient>';
}

function grid() {
	return '<pattern id="minor" width="11.2" height="11.2" patternUnits="userSpaceOnUse" x="401" y="246"><path d="M0 0h11.2M0 0v11.2" stroke="#353535" stroke-width="3"/></pattern>' +
		'<pattern id="major" width="89.6" height="89.6" patternUnits="userSpaceOnUse" x="400" y="245"><path d="M0 1h89.6M1 0v89.6" stroke="#161616" stroke-width="2"/></pattern>';
}

function drawNode(s) {
	var a = s.split(' '), k = a[0], x = +a[1], y = +a[2], w = +a[3], h = +a[4], o = '', i;
	if (k === 'v' || k === 's') {
		o += rect(x, y, w, h, '#3c4347', 'rx="2"');
		o += rect(x + 4, y, w - 8, k === 'v' ? 3 : 2, k === 'v' ? '#35789e' : '#a03a68');
		o += rect(x + 1, y, w - 3, 1, '#9ab', 'opacity=".5"');
		if (k === 'v') {
			if (w < 30) o += rect(x + 3, y + 2, 3, 3, '#0a78e4');
			o += rect(x + w - 5, y + 2, 3, 3, '#0a78e4');
		} else {
			o += rect(x + w - 5, y + 2, 3, 3, '#802040');
		}
		return o;
	}
	if (pins[k]) {
		o += rect(x, y, w, h, '#454745', 'rx="2"') + rect(x + 2, y, w - 4, 1, '#888');
		if (k === 't') {
			return o + rect(x + 3, y + 3, 2, 3, '#fff') + rect(x + 3, y + 9, 2, 2, pins.t) + rect(x + w - 5, y + 9, 2, 2, pins.t) + rect(x + 8, y + 1, 7, 1, '#902020');
		}
		o += rect(x + 3, y + 3, 2, 2, pins[k]) + rect(x + w - 5, y + 3, 2, 2, pins[k]);
		if (h > 8) o += rect(x + 3, y + h - 4, 2, 2, pins[k]) + rect(x + 11, y + 4, 3, 3, '#777') + rect(x + w - 5, y + h - 4, 3, 2, '#888');
		return o;
	}
	o += rect(x, y, w, h, '#1c1c1c') + rect(x, y, w, Math.min(8, h), heads[k]);
	o += rect(x + 3, y + 3, w - 11, 3, '#000', 'opacity=".3"');
	if (k === 'r') {
		if (h > 20) o += rect(x + w - 4, y + 10, 2, 3, '#fff') + rect(x + w - 5, y + 20, 3, 2, '#2c4058');
	} else if (k === 'p') {
		if (h > 20) {
			o += rect(x + w - 5, y + 9, 2, 2, '#0a78e4') + rect(x + 2, y + 14, 3, 2, '#0a78e4');
			for (i = 19; i < h - 6; i += 5) o += rect(x + 3, y + i, 1, 2, '#6a1a1a');
		} else {
			o += rect(x + 4, y + h - 4, 2, 2, '#2c4a68') + rect(x + w - 5, y + h - 4, 3, 2, '#0a78e4');
		}
	} else if (k === 'g') {
		o += rect(x + 3, y + h - 4, 2, 2, '#0a78e4') + rect(x + w - 6, y + h - 4, 3, 2, '#0a78e4') + rect(x, y, w - 8, 1, '#5c9a45');
	} else {
		o += rect(x + 2, y + 10, 2, 3, '#fff');
		if (h !== 19 && h !== 20) o += rect(x + w - 5, y + 10, 2, 3, '#fff');
		if (k === 'b' || k === 'g4') o += rect(x + 2, y + 15, 3, 2, '#0a78e4');
		if (k === 'b' && h > 22) o += rect(x + 2, y + 20, 2, 2, '#24547e');
		if (k === 'y') o += rect(x + w - 5, y + 26, 2, 2, '#5c9a45') + rect(x + 2, y + h - 4, 1, 2, '#5c9a45');
		if (k === 'g4') for (i = 20; i < 32; i += 5) o += rect(x + 2, y + i, 2, 2, '#5c9a45');
	}
	return o;
}

function drawWire(s) {
	var a = s.split(' '), st = stroke[a[0]], x1 = +a[1], y1 = +a[2], x2 = +a[3], y2 = +a[4];
	var c = Math.max(4, Math.abs(x2 - x1) * .45);
	return '<path fill="none" stroke="' + st[0] + '" stroke-width="' + st[1] + '" opacity="' + st[2] + '" d="M' + x1 + ' ' + y1 +
		'C' + (x1 + c) + ' ' + y1 + ' ' + (x2 - c) + ' ' + y2 + ' ' + x2 + ' ' + y2 + '"/>';
}

var out = '<defs>' + grid() +
	head('hr', '#7d1616', '#2a1818') + head('hb', '#2d5a78', '#22303a') + head('hp', '#1f4260', '#1c2226') +
	head('hy', '#94680f', '#4a3a18') + head('hg', '#4a5a48', '#222') + head('hw', '#868686', '#333') + '</defs>';
out += '<g transform="translate(' + -OX + ' ' + -OY + ')">';
out += rect(OX, OY, 4000, 3000, 'url(#minor)') + rect(OX, OY, 4000, 3000, 'url(#major)');
comments.forEach(function (c) {
	var top = c[1] < 200 || (c[3] - c[1] < 20) ? 6 : 7;
	out += rect(c[0], c[1], c[2] - c[0], c[3] - c[1], '#fff', 'opacity=".3" stroke="#000" stroke-opacity=".4"');
	out += rect(c[0] + 1, c[1] + 1, c[2] - c[0] - 1, top, '#a9a9a9');
	out += '<text class="w-title" x="' + (c[0] + 2) + '" y="' + (c[1] + 6) + '">' + c[4] + '</text>';
	out += '<path fill="#ccc" d="M' + c[2] + ' ' + (c[3] - 3) + 'v3h-3z"/>';
});
wires.forEach(function (w) { out += drawWire(w); });
// loop-backs between stacked nodes
['M761 374q8 8-8 20t-22 14', 'M758 416q6 12-8 26t-16 12', 'M758 458q6 12-8 26t-16 12'].forEach(function (d) {
	out += '<path fill="none" stroke="#b4b4b4" stroke-width="2" opacity=".4" d="' + d + '"/>';
});
out += '<path fill="none" stroke="#b4b4b4" stroke-width="2" opacity=".45" d="M633 807C670 808 680 796 640 783C560 757 480 748 396 728"/>';
[[382, 250, 383, 275], [387, 407, 389, 432], [583, 258, 584, 282], [782, 253, 783, 278], [956, 247, 957, 270], [1124, 249, 1125, 272]].forEach(function (p) {
	out += '<path fill="none" stroke="#3f84ad" opacity=".7" d="M' + p[0] + ' ' + p[1] + 'q-14 6 ' + (p[2] - p[0]) + ' ' + (p[3] - p[1]) + '"/>';
	out += '<path fill="none" stroke="#3f84ad" opacity=".7" d="M' + (p[0] + 26) + ' ' + (p[1] + 57) + 'q18 24 2 25"/>';
});
out += '<path fill="none" stroke="#5c9a45" d="M585 417l-4 8M602 434l-3 20M614 465l-16 16"/>';
nodes.forEach(function (n) { out += drawNode(n); });
// reroute knots and node badges
[[527, 752], [443, 706], [392, 752], [440, 642], [1061, 418], [398, 557]].forEach(function (p) {
	out += rect(p[0], p[1], 3, 3, '#fff');
});
out += rect(628, 772, 3, 2, '#0a78e4') + rect(420, 722, 3, 2, '#f0d') + rect(971, 479, 2, 2, '#fdc01e') + rect(928, 490, 2, 2, '#fdc01e');
out += '</g>';
document.getElementById('canvas').innerHTML = out;
```
